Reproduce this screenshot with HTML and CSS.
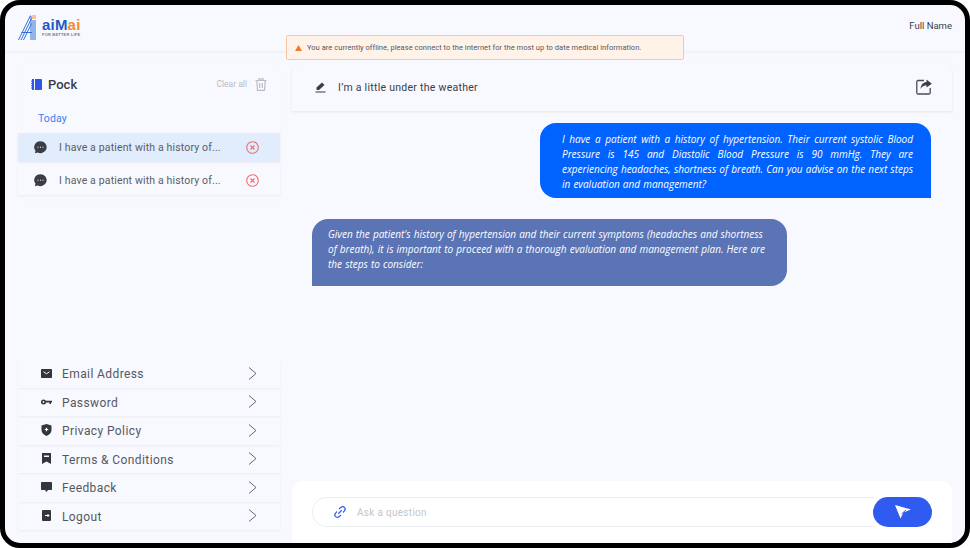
FILE: index.html
```html
<!DOCTYPE html>
<html lang="en">
<head>
    <meta charset="UTF-8">
    <title>aiMai Chat</title>
    <link rel="stylesheet" href="styles.css">
</head>
<body>
    <div class="frame">
        <header class="topbar">
            <div class="logo">
                <svg class="logo-mark" width="21" height="25" viewBox="0 0 21 25" fill="none" stroke="#2f6fdc" stroke-width="1">
                    <path d="M0.500 25 L12.500 0.500 M3 25 L13.500 3.500 M5.500 25 L13.500 8.500"/>
                    <path d="M3.500 17.500 H14" stroke-width="1.200"/>
                    <path d="M13 1 V25 M15 5 V25 M17 5 V25"/>
                    <path d="M15 0 V4 M17 0 V4" stroke="#f0913c"/>
                </svg>
                <div class="logo-text">
                    <div class="logo-name">aiM<span class="logo-accent">ai</span></div>
                    <div class="logo-tag">FOR BETTER LIFE</div>
                </div>
            </div>
            <div class="user-name">Full Name</div>
        </header>

        <div class="offline-banner">
            <svg width="7" height="6" viewBox="0 0 7 6"><path d="M3.500 0 L7 6 H0 Z" fill="#f07b24"/></svg>
            <span>You are currently offline, please connect to the internet for the most up to date medical information.</span>
        </div>

        <div class="content">
            <aside class="sidebar">
                <section class="pock">
                    <div class="pock-head">
                        <svg width="11" height="11" viewBox="0 0 11 11"><path d="M1 0 H3 V11 H1 Z M4 0 H10 a1 1 0 0 1 1 1 V10 a1 1 0 0 1 -1 1 H4 Z" fill="#2f55e6"/><path d="M0 2 H2 M0 4.300 H2 M0 6.700 H2 M0 9 H2" stroke="#2f55e6"/></svg>
                        <span class="pock-title">Pock</span>
                        <span class="clear-all">Clear all</span>
                        <svg width="12" height="13" viewBox="0 0 12 13" fill="none" stroke="#b9bcc4" stroke-width="1.200"><path d="M0.500 2.500 H11.500 M4 2.500 V0.800 H8 V2.500 M1.800 2.500 L2.500 12.300 H9.500 L10.200 2.500 M4.700 5 V10 M7.300 5 V10"/></svg>
                    </div>
                    <div class="day-label">Today</div>
                    <div class="chat-item active">
                        <svg class="bubble" width="13" height="13" viewBox="0 0 13 13"><path d="M6.500 0.300 a6.200 5.900 0 1 1 -3 11.100 L0.800 12.300 L1.500 9.800 A6.200 5.900 0 0 1 6.500 0.300 Z" fill="#3a3d45"/><path d="M3.500 6.200 h1 M6 6.200 h1 M8.500 6.200 h1" stroke="#fff" stroke-width="1"/></svg>
                        <span class="chat-text">I have a patient with a history of...</span>
                        <svg width="13" height="13" viewBox="0 0 13 13" fill="none" stroke="#ec6d72" stroke-width="1.100"><circle cx="6.500" cy="6.500" r="5.800"/><path d="M4.500 4.500 L8.500 8.500 M8.500 4.500 L4.500 8.500"/></svg>
                    </div>
                    <div class="chat-item">
                        <svg class="bubble" width="13" height="13" viewBox="0 0 13 13"><path d="M6.500 0.300 a6.200 5.900 0 1 1 -3 11.100 L0.800 12.300 L1.500 9.800 A6.200 5.900 0 0 1 6.500 0.300 Z" fill="#3a3d45"/><path d="M3.500 6.200 h1 M6 6.200 h1 M8.500 6.200 h1" stroke="#fff" stroke-width="1"/></svg>
                        <span class="chat-text">I have a patient with a history of...</span>
                        <svg width="13" height="13" viewBox="0 0 13 13" fill="none" stroke="#ec6d72" stroke-width="1.100"><circle cx="6.500" cy="6.500" r="5.800"/><path d="M4.500 4.500 L8.500 8.500 M8.500 4.500 L4.500 8.500"/></svg>
                    </div>
                </section>

                <nav class="menu">
                    <a class="menu-item">
                        <svg class="menu-icon" width="11" height="9" viewBox="0 0 11 9"><path d="M0.800 0 H10.200 a0.800 0.800 0 0 1 0.800 0.800 V8.200 a0.800 0.800 0 0 1 -0.800 0.800 H0.800 a0.800 0.800 0 0 1 -0.800 -0.800 V0.800 a0.800 0.800 0 0 1 0.800 -0.800 Z" fill="#33363d"/><path d="M2.500 2.700 L5.500 4.800 L8.500 2.700" stroke="#fff" stroke-width="1" fill="none"/></svg>
                        <span class="menu-label">Email Address</span>
                        <svg class="chevron" width="9" height="13" viewBox="0 0 9 13" fill="none" stroke="#666a72" stroke-width="1"><path d="M1 0.500 L8 6.500 L1 12.500"/></svg>
                    </a>
                    <a class="menu-item">
                        <svg class="menu-icon" width="11" height="6" viewBox="0 0 11 6"><circle cx="2.500" cy="3" r="1.700" fill="none" stroke="#33363d" stroke-width="1.600"/><path d="M4 1.800 H11 V3.600 H10 V5 H8.500 V3.600 H4 Z" fill="#33363d"/></svg>
                        <span class="menu-label">Password</span>
                        <svg class="chevron" width="9" height="13" viewBox="0 0 9 13" fill="none" stroke="#666a72" stroke-width="1"><path d="M1 0.500 L8 6.500 L1 12.500"/></svg>
                    </a>
                    <a class="menu-item">
                        <svg class="menu-icon" width="11" height="12" viewBox="0 0 11 12"><path d="M5.500 0 L10.500 1.600 V6 C10.500 9 8 11 5.500 12 C3 11 0.500 9 0.500 6 V1.600 Z" fill="#33363d"/><path d="M3.800 5.500 H7.200 M5.500 3.800 V7.200" stroke="#fff" stroke-width="1.200"/></svg>
                        <span class="menu-label">Privacy Policy</span>
                        <svg class="chevron" width="9" height="13" viewBox="0 0 9 13" fill="none" stroke="#666a72" stroke-width="1"><path d="M1 0.500 L8 6.500 L1 12.500"/></svg>
                    </a>
                    <a class="menu-item">
                        <svg class="menu-icon" width="9" height="11" viewBox="0 0 9 11"><path fill-rule="evenodd" d="M0 0 H9 V11 L4.500 8.500 L0 11 Z M2 2.500 V4 H7 V2.500 Z" fill="#33363d"/></svg>
                        <span class="menu-label">Terms &amp; Conditions</span>
                        <svg class="chevron" width="9" height="13" viewBox="0 0 9 13" fill="none" stroke="#666a72" stroke-width="1"><path d="M1 0.500 L8 6.500 L1 12.500"/></svg>
                    </a>
                    <a class="menu-item">
                        <svg class="menu-icon" width="11" height="10" viewBox="0 0 11 10"><path d="M0.800 0 H10.200 a0.800 0.800 0 0 1 0.800 0.800 V7.200 a0.800 0.800 0 0 1 -0.800 0.800 H7 L5.500 10 L4 8 H0.800 a0.800 0.800 0 0 1 -0.800 -0.800 V0.800 a0.800 0.800 0 0 1 0.800 -0.800 Z" fill="#33363d"/></svg>
                        <span class="menu-label">Feedback</span>
                        <svg class="chevron" width="9" height="13" viewBox="0 0 9 13" fill="none" stroke="#666a72" stroke-width="1"><path d="M1 0.500 L8 6.500 L1 12.500"/></svg>
                    </a>
                    <a class="menu-item">
                        <svg class="menu-icon" width="9" height="11" viewBox="0 0 9 11"><path d="M1 0 H8 a1 1 0 0 1 1 1 V10 a1 1 0 0 1 -1 1 H1 a1 1 0 0 1 -1 -1 V1 a1 1 0 0 1 1 -1 Z" fill="#33363d"/><path d="M3 5.500 H7 M5.500 4 L7 5.500 L5.500 7" stroke="#fff" stroke-width="1" fill="none"/></svg>
                        <span class="menu-label">Logout</span>
                        <svg class="chevron" width="9" height="13" viewBox="0 0 9 13" fill="none" stroke="#666a72" stroke-width="1"><path d="M1 0.500 L8 6.500 L1 12.500"/></svg>
                    </a>
                </nav>
            </aside>

            <main class="chat">
                <div class="chat-head">
                    <svg width="11" height="11" viewBox="0 0 11 11"><path d="M7 0.500 L9.500 3 L4 8 H1.500 V5.500 Z" fill="#3a3d45"/><path d="M0.500 10 H10.500" stroke="#3a3d45" stroke-width="1.200"/></svg>
                    <span class="chat-title">I’m a little under the weather</span>
                    <svg class="share" width="16" height="16" viewBox="0 0 16 16" fill="none"><path d="M8 1.500 H2 a1.200 1.200 0 0 0 -1.200 1.200 V13.800 A1.200 1.200 0 0 0 2 15 H13 a1.200 1.200 0 0 0 1.200 -1.200 V9" stroke="#4a4d55" stroke-width="1.300"/><path d="M10.500 0.500 L15.800 4.800 L10.500 8.500 V6.300 C8 6.300 6 7.500 4.500 10 C5 6 7 3.300 10.500 3 Z" fill="#3a3d45"/></svg>
                </div>

                <div class="messages">
                    <div class="msg msg-user">I have a patient with a history of hypertension. Their current systolic Blood Pressure is 145 and Diastolic Blood Pressure is 90 mmHg. They are experiencing headaches, shortness of breath. Can you advise on the next steps in evaluation and management?</div>
                    <div class="msg msg-bot">Given the patient's history of hypertension and their current symptoms (headaches and shortness of breath), it is important to proceed with a thorough evaluation and management plan. Here are the steps to consider:</div>
                </div>

                <div class="composer">
                    <div class="ask-box">
                        <svg width="12" height="12" viewBox="0 0 12 12" fill="none" stroke="#3b62e8" stroke-width="1.300"><path d="M5 3 L6.800 1.500 a2.400 2.400 0 0 1 3.600 3.400 L9 6.500 M7 9 L5.200 10.500 a2.400 2.400 0 0 1 -3.600 -3.400 L3 5.500 M4.300 7.700 L7.700 4.300"/></svg>
                        <span class="ask-text">Ask a question</span>
                    </div>
                    <button class="send-btn">
                        <svg width="16" height="14" viewBox="0 0 16 14"><path d="M0 0 L16 4.500 L8.500 7.500 L5.500 13.500 Z" fill="#fff"/><path d="M11 5 L6.500 9" stroke="#2f5bf0" stroke-width="1"/></svg>
                    </button>
                </div>
            </main>
        </div>
    </div>
</body>
</html>
```

FILE: styles.css
```css
* {
    box-sizing: border-box;
}

html, body {
    margin: 0;
    height: 100%;
    background: #fff;
    overflow: hidden;
}

body {
    font-family: Roboto, Arial, sans-serif;
    color: #3a3d45;
}

.frame {
    position: relative;
    width: 970px;
    height: 548px;
    border: 5px solid #000;
    border-radius: 20px;
    background: #f8f9fe;
    overflow: hidden;
}

.topbar {
    height: 47px;
    padding: 0 13px 0 13px;
    display: flex;
    align-items: center;
    justify-content: space-between;
    border-bottom: 1px solid #f0f1f5;
    box-shadow: 0 1px 3px rgba(0, 0, 0, 0.03);
}

.logo {
    display: flex;
    align-items: center;
    gap: 3px;
    margin-top: -2px;
}

.logo-name {
    font-family: "Liberation Sans", Arial, sans-serif;
    font-size: 15px;
    line-height: 15px;
    font-weight: bold;
    color: #1e5bc6;
    letter-spacing: 0.2px;
}

.logo-accent {
    color: #f58a2e;
}

.logo-tag {
    font-family: "Liberation Sans", Arial, sans-serif;
    font-size: 4px;
    line-height: 5px;
    font-weight: bold;
    color: #7b7f88;
    letter-spacing: 0.2px;
    white-space: nowrap;
}

.user-name {
    font-size: 9.500px;
    color: #3a3d45;
    margin-top: -5px;
}

.offline-banner {
    position: absolute;
    left: 281px;
    top: 30px;
    width: 398px;
    height: 25px;
    padding-left: 8px;
    display: flex;
    align-items: center;
    gap: 5px;
    background: #fff3e9;
    border: 1px solid #f6c9a2;
    border-radius: 2px;
    font-size: 7.500px;
    letter-spacing: 0.04px;
    color: #555860;
    z-index: 2;
}

.content {
    height: 491px;
    padding: 11px 13px 0;
    display: flex;
    gap: 12px;
}

.sidebar {
    width: 262px;
    height: 480px;
    display: flex;
    flex-direction: column;
    justify-content: space-between;
    padding-bottom: 13px;
}

.pock {
    border-radius: 10px 10px 0 0;
    box-shadow: 0 0 4px rgba(0, 0, 0, 0.015);
}

.pock-head {
    height: 42px;
    padding: 0 13px;
    display: flex;
    align-items: center;
}

.pock-title {
    margin-left: 6px;
    font-size: 13px;
    font-weight: 500;
}

.clear-all {
    margin-left: auto;
    margin-right: 8px;
    font-size: 8.500px;
    color: #b9bcc4;
}

.day-label {
    height: 28px;
    padding-left: 20px;
    font-size: 10.500px;
    line-height: 27px;
    letter-spacing: 0.1px;
    color: #3b7df0;
}

.chat-item {
    height: 29px;
    margin-bottom: 4px;
    padding: 0 21px 0 16px;
    display: flex;
    align-items: center;
    font-size: 10.500px;
    color: #5a5d65;
    box-shadow: 0 1px 2px rgba(0, 0, 0, 0.06);
}

.chat-item.active {
    background: #e1ecfc;
}

.chat-text {
    flex: 1;
    margin-left: 12px;
    white-space: nowrap;
    letter-spacing: 0.15px;
}

.menu-item {
    height: 28.500px;
    padding: 0 23px;
    display: grid;
    grid-template-columns: 11px 1fr auto;
    column-gap: 10px;
    align-items: center;
    font-size: 12px;
    letter-spacing: 0.4px;
    color: #55585f;
    box-shadow: 0 1px 2px rgba(0, 0, 0, 0.05);
}

.menu-icon {
    justify-self: center;
}

.menu-label {
    margin-top: 2px;
}

.chat {
    flex: 1;
    height: 480px;
    display: flex;
    flex-direction: column;
}

.chat-head {
    height: 48px;
    flex: none;
    padding: 0 20px 0 23px;
    display: flex;
    align-items: center;
    border-radius: 10px 10px 0 0;
    box-shadow: 0 1px 3px rgba(0, 0, 0, 0.08);
}

.chat-title {
    margin-left: 12px;
    font-size: 10.500px;
    letter-spacing: 0.27px;
    color: #3a3d45;
}

.share {
    margin-left: auto;
}

.messages {
    flex: 1;
    padding: 12px 21px 0 20px;
    display: flex;
    flex-direction: column;
    gap: 21px;
}

.msg {
    font-family: "Open Sans", Arial, sans-serif;
    font-style: italic;
    font-size: 10px;
    line-height: 15px;
    word-spacing: 0.5px;
    color: #fff;
}

.msg-user {
    align-self: flex-end;
    width: 391px;
    height: 75px;
    padding: 9px 18px 0 22px;
    background: #0062ff;
    border-radius: 16px 16px 0 16px;
    text-align: justify;
}

.msg-bot {
    align-self: flex-start;
    width: 475px;
    height: 67px;
    padding: 8px 15px 0 16px;
    background: #5a74b6;
    border-radius: 16px 16px 16px 0;
}

.composer {
    height: 62px;
    flex: none;
    padding: 16px 20px 0;
    display: flex;
    background: #fff;
    border-radius: 10px 10px 0 0;
}

.ask-box {
    flex: 1;
    height: 30px;
    padding-left: 21px;
    display: flex;
    align-items: center;
    gap: 11px;
    border: 1px solid #eceef2;
    border-right: 0;
    border-radius: 15px 0 0 15px;
}

.ask-text {
    font-size: 10px;
    letter-spacing: 0.3px;
    color: #c4c6cc;
}

.send-btn {
    width: 59px;
    height: 30px;
    margin-left: -1px;
    padding: 0;
    border: 0;
    border-radius: 15px;
    background: #2f5bf0;
    display: flex;
    align-items: center;
    justify-content: center;
}
```
